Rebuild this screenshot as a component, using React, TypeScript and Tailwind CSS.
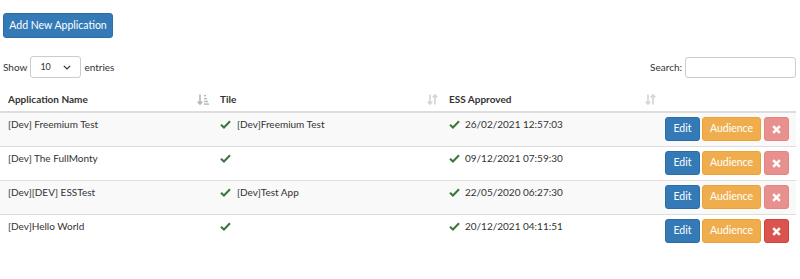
import React from 'react'

type Row = {
  name: string
  tile: string
  approved: string
  canDelete: boolean
}

const rows: Row[] = [
  { name: '[Dev] Freemium Test', tile: '[Dev]Freemium Test', approved: '26/02/2021 12:57:03', canDelete: false },
  { name: '[Dev] The FullMonty', tile: '', approved: '09/12/2021 07:59:30', canDelete: false },
  { name: '[Dev][DEV] ESSTest', tile: '[Dev]Test App', approved: '22/05/2020 06:27:30', canDelete: false },
  { name: '[Dev]Hello World', tile: '', approved: '20/12/2021 04:11:51', canDelete: true }
]

function Check() {
  return (
    <svg width="11" height="9" viewBox="0 0 12 10" className="shrink-0">
      <path d="M1 5.2 L4.3 8.3 L11 1.5" fill="none" stroke="#3c763d" strokeWidth="2.3" />
    </svg>
  )
}

function SortBoth() {
  return (
    <svg width="11" height="11" viewBox="0 0 11 11">
      <g fill="none" stroke="#d4d4d4" strokeWidth="1.6">
        <path d="M3 0.5 V10" />
        <path d="M0.8 7.6 L3 10 L5.2 7.6" />
        <path d="M8 10.5 V1" />
        <path d="M5.8 3.4 L8 1 L10.2 3.4" />
      </g>
    </svg>
  )
}

function SortAsc() {
  return (
    <svg width="12" height="11" viewBox="0 0 12 11">
      <g fill="#b5b5b5" stroke="#b5b5b5">
        <path d="M3 0.5 V10" fill="none" strokeWidth="1.6" />
        <path d="M0.8 7.6 L3 10 L5.2 7.6" fill="none" strokeWidth="1.6" />
        <rect x="7" y="1" width="2" height="1.4" stroke="none" />
        <rect x="7" y="4" width="3" height="1.4" stroke="none" />
        <rect x="7" y="6.8" width="4" height="1.4" stroke="none" />
        <rect x="7" y="9.4" width="5" height="1.4" stroke="none" />
      </g>
    </svg>
  )
}

function RemoveIcon() {
  return (
    <svg width="9" height="9" viewBox="0 0 9 9">
      <path d="M1.2 1.2 L7.8 7.8 M7.8 1.2 L1.2 7.8" stroke="#fff" strokeWidth="2.6" />
    </svg>
  )
}

export default function App() {
  return (
    <div className="w-[800px] h-[279px] bg-white text-[10px] text-[#333] font-['Lato',sans-serif]">
      {/* Add button */}
      <div className="pt-[13px] pl-[3px]">
        <button className="w-[110px] h-[25px] rounded-[3px] bg-[#337ab7] border border-[#2e6da4] text-white text-[10.5px] leading-none">
          Add New Application
        </button>
      </div>

      {/* Length + search */}
      <div className="flex items-center justify-between mt-[18px] pl-[3px] pr-[4px]">
        <div className="flex items-center gap-[3px]">
          <span>Show</span>
          <div className="w-[51px] h-[22px] border border-[#ccc] rounded-[3px] flex items-center justify-between px-[9px] text-[9px]">
            <span>10</span>
            <svg width="8" height="5" viewBox="0 0 8 5">
              <path d="M0.8 0.8 L4 4 L7.2 0.8" fill="none" stroke="#333" strokeWidth="1.2" />
            </svg>
          </div>
          <span>entries</span>
        </div>
        <div className="flex items-center gap-[3px]">
          <span>Search:</span>
          <div className="w-[111px] h-[21px] border border-[#ccc] rounded-[3px]" />
        </div>
      </div>

      {/* Table */}
      <table className="mt-[10px] w-[796px] border-collapse">
        <thead>
          <tr className="h-[24px] border-b-2 border-[#ddd]">
            <th className="w-[212px] text-left font-bold pl-[8px] pr-[3px]">
              <div className="flex items-center justify-between">
                <span>Application Name</span>
                <SortAsc />
              </div>
            </th>
            <th className="w-[229px] text-left font-bold pl-[8px] pr-[3px]">
              <div className="flex items-center justify-between">
                <span>Tile</span>
                <SortBoth />
              </div>
            </th>
            <th className="w-[219px] text-left font-bold pl-[8px] pr-[4px]">
              <div className="flex items-center justify-between">
                <span>ESS Approved</span>
                <SortBoth />
              </div>
            </th>
            <th />
          </tr>
        </thead>
        <tbody>
          {rows.map((r, i) => (
            <tr key={r.name} className={`border-b border-[#ddd] last:border-b-0 ${i % 2 === 0 ? 'bg-[#f9f9f9]' : 'bg-white'}`}>
              <td className="pl-[8px] align-top pt-[4px] h-[34px]">{r.name}</td>
              <td className="pl-[8px] align-top pt-[4px]">
                <div className="flex items-center gap-[6px] h-[15px]">
                  <Check />
                  {r.tile && <span>{r.tile}</span>}
                </div>
              </td>
              <td className="pl-[8px] align-top pt-[4px]">
                <div className="flex items-center gap-[5px] h-[15px]">
                  <Check />
                  <span>{r.approved}</span>
                </div>
              </td>
              <td className="align-middle py-[3px] pl-[5px]">
                <div className="flex items-center">
                  <button className="w-[35px] h-[24px] rounded-[3px] bg-[#337ab7] border border-[#2e6da4] text-white text-[10.5px]">
                    Edit
                  </button>
                  <button className="ml-[2px] w-[59px] h-[24px] rounded-[3px] bg-[#f0ad4e] border border-[#eea236] text-white text-[10.5px]">
                    Audience
                  </button>
                  <button
                    className={`ml-[3px] w-[25px] h-[24px] rounded-[3px] flex items-center justify-center ${
                      r.canDelete ? 'bg-[#d9534f] border border-[#d43f3a]' : 'bg-[#e8908e] border border-[#e58583]'
                    }`}
                  >
                    <RemoveIcon />
                  </button>
                </div>
              </td>
            </tr>
          ))}
        </tbody>
      </table>
    </div>
  )
}
